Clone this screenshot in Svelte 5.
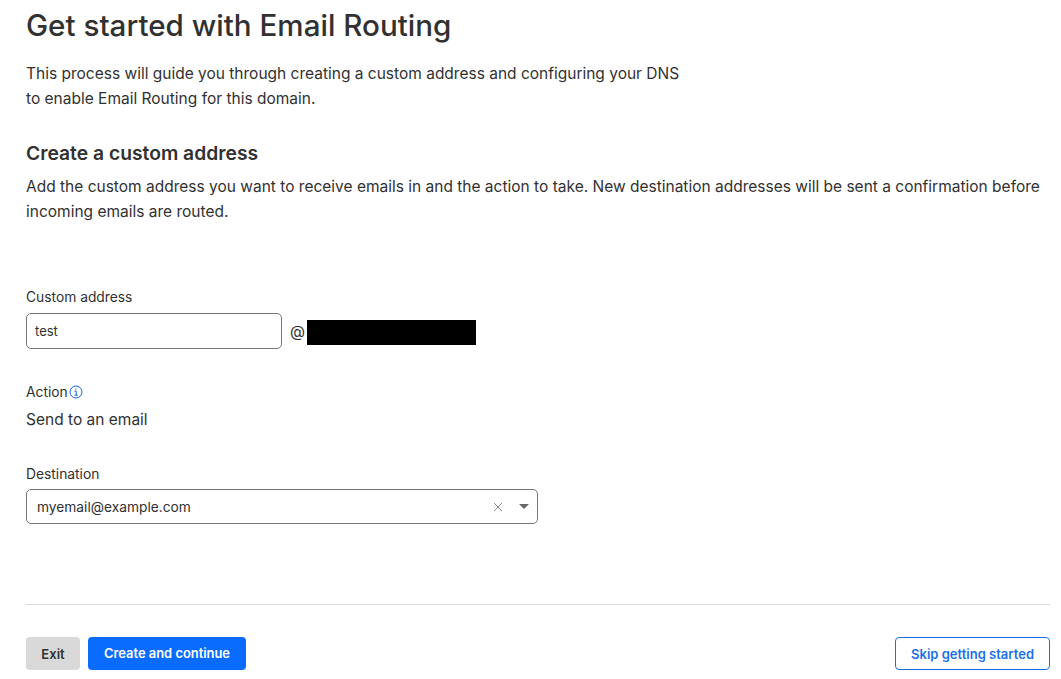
<script lang="ts">
  let local = $state('test');
</script>

<main class="page">
  <h1>Get started with Email Routing</h1>
  <p class="intro">This process will guide you through creating a custom address and configuring your DNS<br />to enable Email Routing for this domain.</p>

  <h2>Create a custom address</h2>
  <p class="desc">Add the custom address you want to receive emails in and the action to take. New destination addresses will be sent a confirmation before incoming emails are routed.</p>

  <div class="field custom">
    <label for="local">Custom address</label>
    <div class="addr">
      <input id="local" bind:value={local} />
      <span class="at">@</span>
      <span class="redact"></span>
    </div>
  </div>

  <div class="field action">
    <div class="label-row">
      <span>Action</span>
      <svg width="14" height="14" viewBox="0 0 14 14" fill="none" stroke="#0f62d6">
        <circle cx="7" cy="7" r="6" />
        <path d="M5.5 6h1.7v4M5.5 10.2h3.2M6.9 3.4v1.3" />
      </svg>
    </div>
    <div class="value">Send to an email</div>
  </div>

  <div class="field dest">
    <span class="lbl">Destination</span>
    <div class="select">
      <span class="sel-val">myemail@example.com</span>
      <svg class="clear" width="10" height="10" viewBox="0 0 10 10" stroke="#888" fill="none"><path d="M1 1l8 8M9 1l-8 8" /></svg>
      <span class="caret"></span>
    </div>
  </div>

  <footer>
    <div class="left">
      <button class="btn exit">Exit</button>
      <button class="btn primary">Create and continue</button>
    </div>
    <button class="btn outline">Skip getting started</button>
  </footer>
</main>

<style>
:global(body) {
  margin: 0;
  background: #fff;
  color: #313131;
  font-family: Inter, sans-serif;
}
.page {
  height: 679px;
  box-sizing: border-box;
  padding: 0 11px 0 26px;
  overflow: hidden;
}
h1 {
  margin: 0;
  padding-top: 5px;
  font-size: 29.6px;
  line-height: 40px;
  font-weight: 500;
}
.intro {
  margin: 16px 0 0;
  font-size: 15.5px;
  line-height: 25px;
}
h2 {
  margin: 28px 0 0;
  font-size: 19.3px;
  line-height: 28px;
  font-weight: 600;
}
.desc {
  margin: 7px 0 0;
  font-size: 15.5px;
  line-height: 25px;
}
.field { font-size: 13.8px; }
.custom { margin-top: 64px; }
label, .lbl { display: block; line-height: 18px; }
.addr { display: flex; align-items: center; margin-top: 7px; }
input {
  width: 256px;
  height: 36px;
  box-sizing: border-box;
  padding: 0 8px;
  border: 1px solid #777;
  border-radius: 5px;
  font: 13px Inter, sans-serif;
  color: #313131;
}
.at { margin-left: 8px; font-size: 15.5px; }
.redact { width: 169px; height: 25px; background: #000; margin: 2px 0 0 2px; }
.action { margin-top: 34px; }
.label-row { display: flex; align-items: center; gap: 1px; line-height: 18px; }
.value { margin-top: 8px; font-size: 15.5px; line-height: 22px; }
.dest { margin-top: 34px; }
.select {
  margin-top: 6px;
  width: 512px;
  height: 35px;
  box-sizing: border-box;
  border: 1px solid #777;
  border-radius: 5px;
  display: flex;
  align-items: center;
  padding: 0 8px 0 10px;
  font-size: 13.75px;
}
.sel-val { flex: 1; }
.clear { margin-right: 16px; }
.caret {
  width: 0;
  height: 0;
  border-left: 5px solid transparent;
  border-right: 5px solid transparent;
  border-top: 5px solid #666;
}
footer {
  margin-top: 80px;
  border-top: 1px solid #d9d9d9;
  padding-top: 32px;
  display: flex;
  justify-content: space-between;
}
.left { display: flex; gap: 8px; }
.btn {
  height: 33px;
  box-sizing: border-box;
  border-radius: 4px;
  border: 1px solid transparent;
  font: 600 13px Inter, sans-serif;
  padding: 0 15px;
}
.exit { background: #d9d9d9; color: #313131; width: 54px; padding: 0; }
.primary { background: #0a6cff; color: #fff; width: 158px; padding: 0; font-size: 12.9px; }
.outline { background: #fff; color: #1a6fe8; border-color: #1a6fe8; }
</style>
